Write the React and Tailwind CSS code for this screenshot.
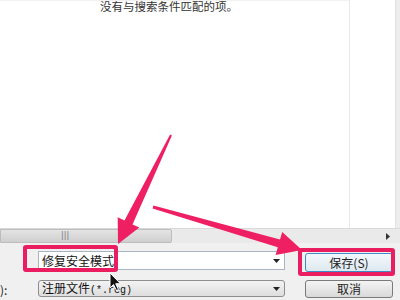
export default function App() {
  const cjk = { fontFamily: '"Noto Sans CJK SC", "Noto Sans", sans-serif' };
  return (
    <div
      className="relative w-[400px] h-[300px] overflow-hidden bg-white text-[#222]"
      style={cjk}
    >
      {/* list area */}
      <div className="flex h-[228px]">
        <div className="w-[350px] border-r border-[#e9e9e9] border-t border-t-[#f2f2f2]">
          <div className="pl-[100px] -mt-[2px] text-[11.5px] leading-[14px] text-[#333]">
            没有与搜索条件匹配的项。
          </div>
        </div>
        <div className="flex-1 bg-white" />
        <div className="w-[5px] bg-[#ededed] border-l border-[#e2e2e2]" />
      </div>

      {/* horizontal scrollbar */}
      <div className="h-[15px] flex items-stretch bg-[#eaeaea] border-t border-[#d9d9d9]">
        <div className="w-[172px] bg-gradient-to-b from-[#e4e4e4] to-[#cfcfcf] border border-[#bdbdbd] rounded-r-[2px] flex items-center pl-[60px]">
          <span className="text-[8px] leading-none text-[#777]" style={{ fontFamily: '"DejaVu Sans", sans-serif' }}>|||</span>
        </div>
        <div className="flex-1" />
        <div className="w-[14px] flex items-center justify-start">
          <svg width="5" height="7" viewBox="0 0 5 7">
            <path d="M0 0 L4 3.5 L0 7 Z" fill="#333" />
          </svg>
        </div>
      </div>

      {/* form area */}
      <div className="h-[57px] bg-[#f0f0f0] pt-[8px]">
        <div className="flex items-start">
          <div className="ml-[38px] w-[247px] h-[19px] bg-white border border-[#a9b5c4] flex items-center justify-between pl-[3px] pr-[4px]">
            <span className="text-[12px] leading-none text-[#111]">修复安全模式</span>
            <svg width="7" height="4" viewBox="0 0 7 4">
              <path d="M0 0 L7 0 L3.5 4 Z" fill="#222" />
            </svg>
          </div>
          <div className="ml-[20px] mt-[2px] w-[88px] h-[19px] rounded-[3px] border border-[#3d8bc4] bg-gradient-to-b from-[#f2f8fc] to-[#dfe9f1] flex items-center justify-center text-[12px] leading-none text-[#222]">
            保存(S)
          </div>
        </div>
        <div className="flex items-start mt-[8px]">
          <div className="w-[38px] text-[12px] leading-[17px] mt-[1px] text-[#222]">):</div>
          <div className="w-[247px] h-[17px] rounded-[3px] border border-[#8e8e8e] bg-gradient-to-b from-[#f3f3f3] to-[#dedede] flex items-center justify-between pl-[3px] pr-[4px]">
            <span className="text-[12px] leading-none text-[#111]">
              注册文件
              <span className="text-[10px]" style={{ fontFamily: '"Liberation Mono", monospace' }}>
                (*.reg)
              </span>
            </span>
            <svg width="7" height="4" viewBox="0 0 7 4">
              <path d="M0 0 L7 0 L3.5 4 Z" fill="#222" />
            </svg>
          </div>
          <div className="ml-[20px] w-[88px] h-[18px] rounded-[3px] border border-[#7a7a7a] bg-gradient-to-b from-[#f4f4f4] to-[#d9d9d9] flex items-center justify-center text-[12px] leading-none text-[#222]">
            取消
          </div>
        </div>
      </div>

      {/* pink highlight boxes */}
      <div className="absolute left-[23px] top-[245px] w-[95px] h-[27px] border-[4px] border-[#ea1d60] rounded-[3px]" />
      <div className="absolute left-[298px] top-[248px] w-[97px] h-[28px] border-[4px] border-[#ea1d60] rounded-[3px]" />

      {/* arrows + cursor */}
      <svg className="absolute left-0 top-0" width="400" height="300" viewBox="0 0 400 300">
        <polygon
          points="171.9,135.4 132.5,224.4 139.3,227.6 118,244 117.7,217.2 124.5,220.4 170.1,134.6"
          fill="#ef1f63"
        />
        <polygon
          points="152.6,208.4 277.8,247.2 275.6,254.9 302,250 282.2,231.9 280,239.6 153.4,205.6"
          fill="#ef1f63"
        />
        <g transform="translate(110,273)">
          <path
            d="M0 0 L0 15 L3.5 11.5 L6.5 17.5 L8.5 16.5 L5.7 10.7 L10.5 10.7 Z"
            fill="#111"
            stroke="#fff"
            strokeWidth="1"
          />
        </g>
      </svg>
    </div>
  );
}
